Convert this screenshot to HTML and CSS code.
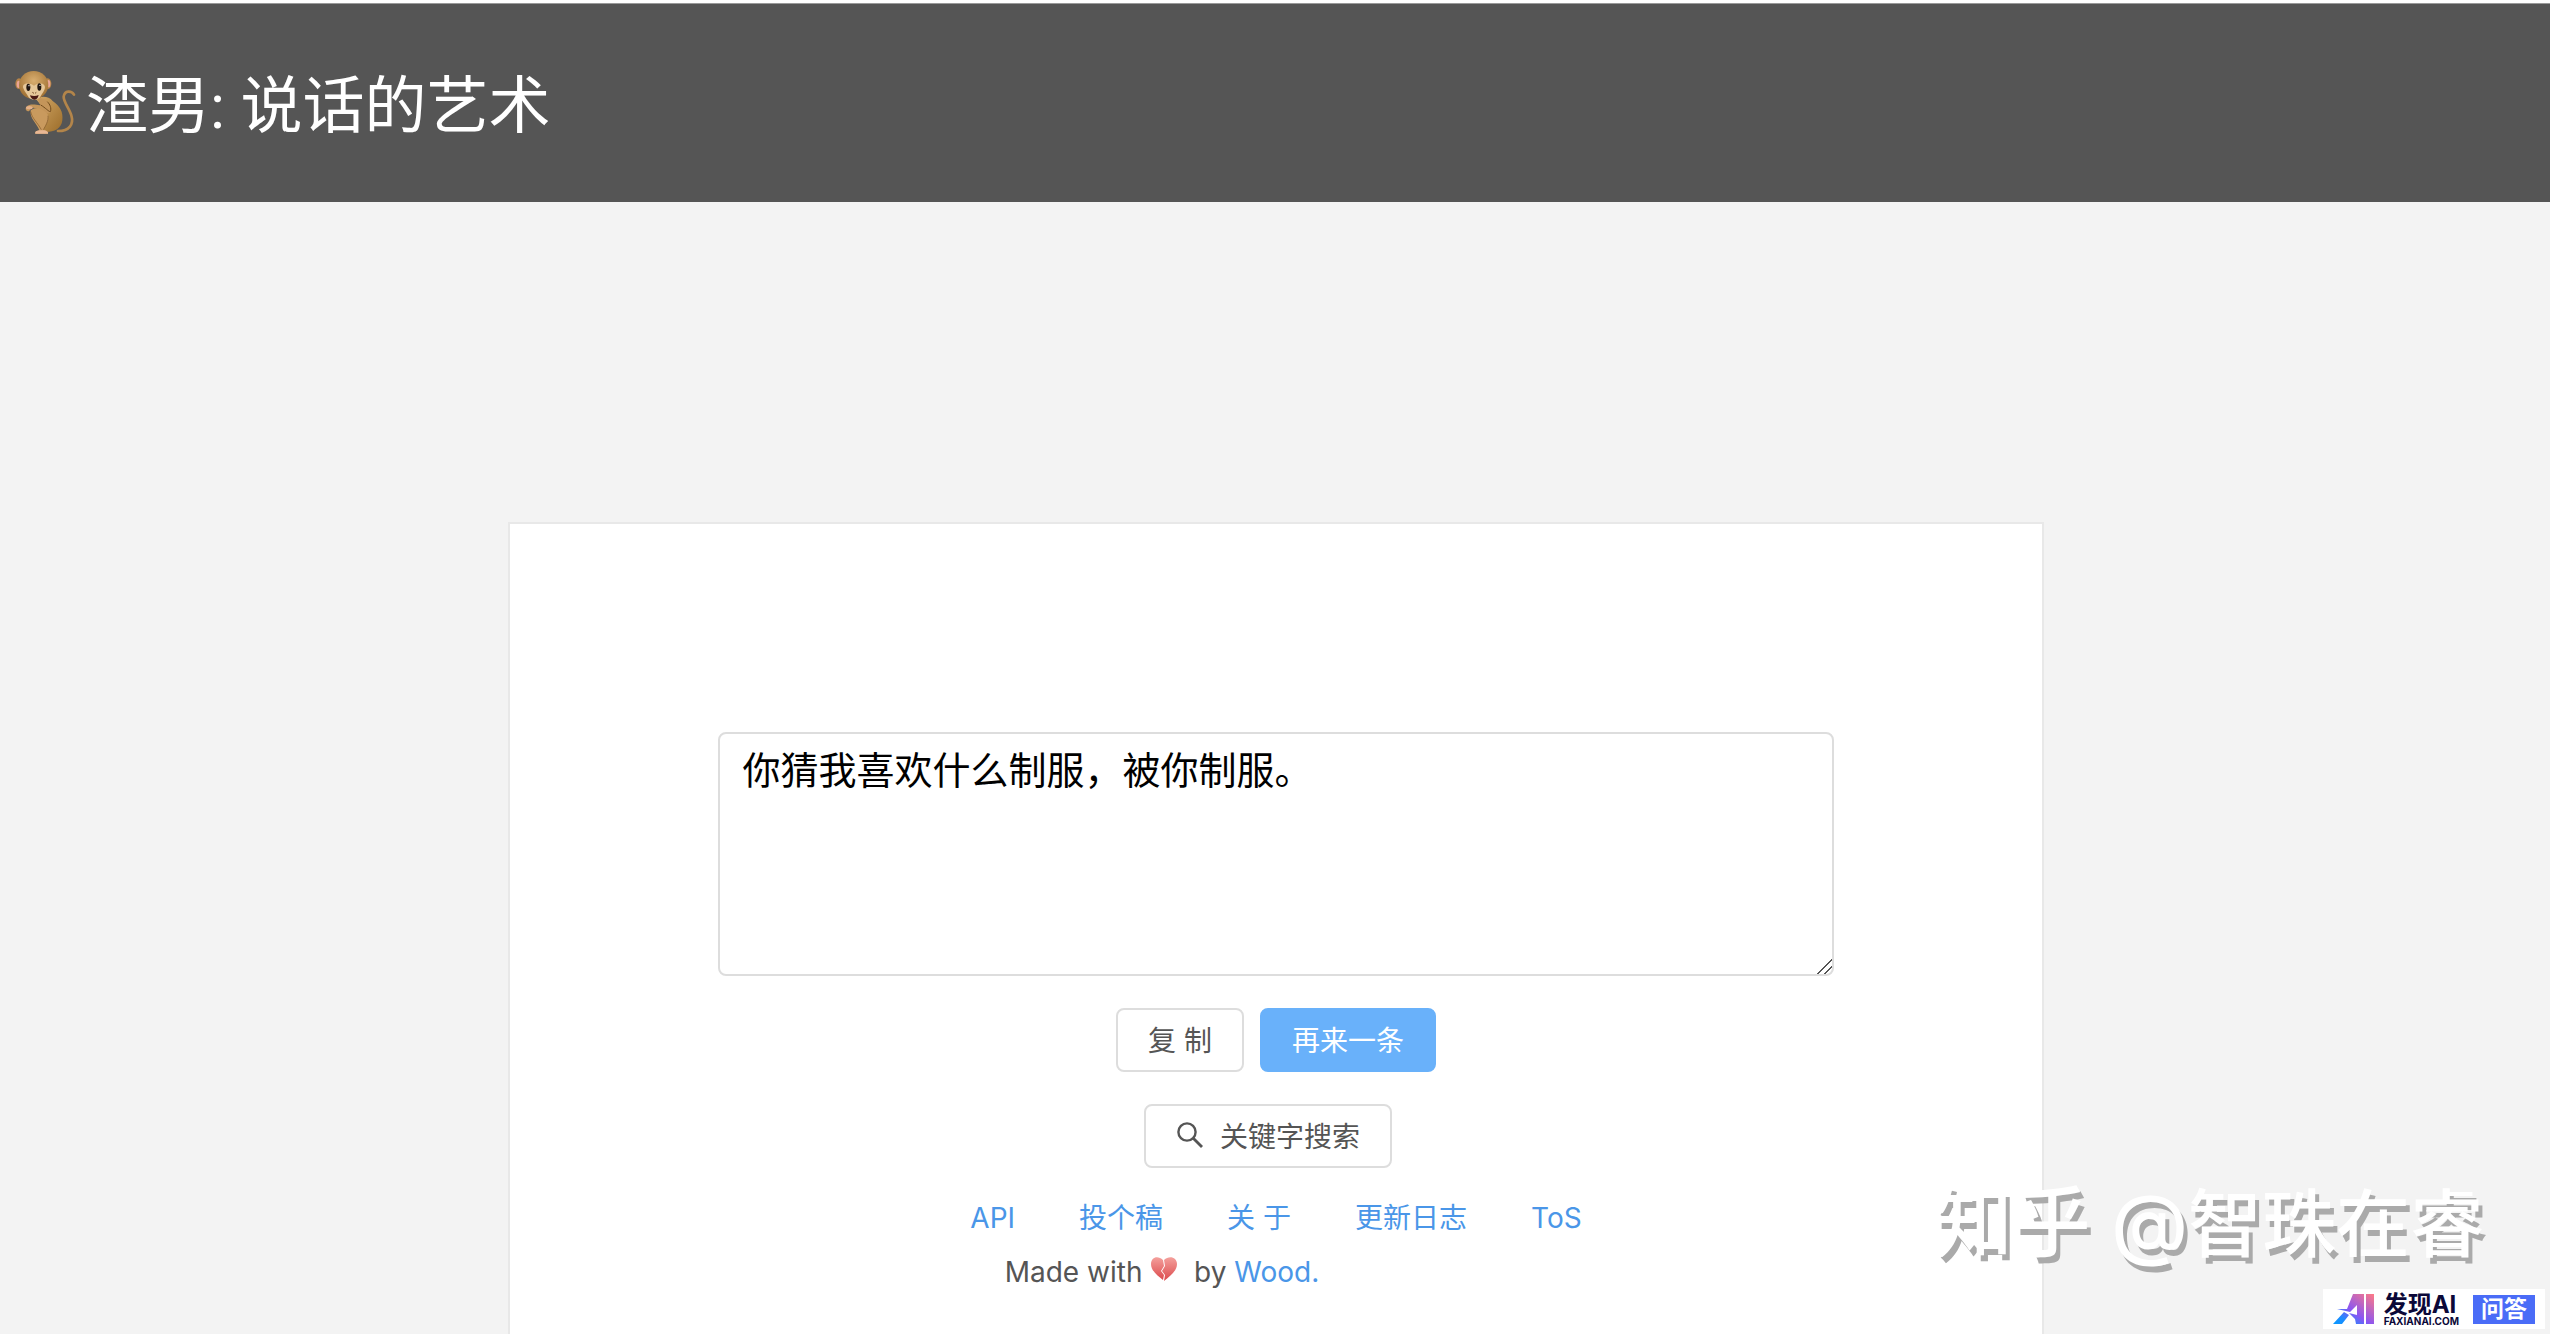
FILE: index.html
```
<!DOCTYPE html>
<html lang="zh-CN">
<head>
    <meta charset="UTF-8">
    <meta name="viewport" content="width=device-width, initial-scale=1.0">
    <title>渣男: 说话的艺术</title>
    <link rel="stylesheet" href="styles.css">
</head>
<body>

<header class="header">
    <svg class="monkey" viewBox="0 0 228 276" aria-hidden="true">
        <defs>
            <linearGradient id="fur" x1="0" y1="0" x2="1" y2="1">
                <stop offset="0" stop-color="#d2a766"/>
                <stop offset="1" stop-color="#9c6d2a"/>
            </linearGradient>
            <radialGradient id="head" cx="0.5" cy="0.35" r="0.6">
                <stop offset="0" stop-color="#d9ae70"/>
                <stop offset="1" stop-color="#a37436"/>
            </radialGradient>
        </defs>
        <path d="M150 210C184 210 198 190 190 163C184 143 166 122 167 107C170 88 190 88 198 101" fill="none" stroke="#b3854a" stroke-width="8" stroke-linecap="round"/>
        <path d="M84 114C98 104 122 104 134 120C156 136 166 152 163 178C160 204 138 214 110 213L92 200L112 150Z" fill="url(#fur)"/>
        <path d="M100 112C124 116 136 146 126 156C112 162 96 142 76 140C66 140 66 154 58 150C50 146 52 136 64 132C76 128 92 134 98 132C92 126 90 118 90 112Z" fill="#c4955a"/>
        <path d="M68 148C84 134 108 146 118 158C128 172 112 192 106 206C116 208 122 214 120 218L82 218C80 212 86 209 94 208C86 186 64 172 68 148Z" fill="#c99a5e"/>
        <path d="M98 132C112 140 122 152 127 152C131 142 126 130 118 122" fill="none" stroke="#6f4a1c" stroke-width="3"/>
        <path d="M68 152C72 172 88 184 100 206M106 206C112 196 122 180 120 164" fill="none" stroke="#80582a" stroke-width="2"/>
        <path d="M82 218C80 212 86 209 94 208L108 208C118 210 122 214 120 218Z" fill="#e8b795"/>
        <ellipse cx="64" cy="140" rx="10" ry="5" fill="#e3b08a"/>
        <ellipse cx="33" cy="68" rx="11" ry="16" fill="#b78448"/>
        <ellipse cx="32" cy="70" rx="6" ry="11" fill="#eaa596"/>
        <ellipse cx="119" cy="68" rx="11" ry="16" fill="#b78448"/>
        <ellipse cx="121" cy="68" rx="6" ry="11" fill="#eaa596"/>
        <ellipse cx="77" cy="72" rx="44" ry="42" fill="url(#head)"/>
        <path d="M46 82C40 64 66 64 78 74C92 62 116 66 110 84C106 94 102 98 98 106C92 120 66 120 60 106C57 98 50 94 46 82Z" fill="#e6c799"/>
        <ellipse cx="61" cy="79" rx="6" ry="11" fill="#1f1510"/>
        <ellipse cx="94" cy="78" rx="6" ry="11" fill="#1f1510"/>
        <circle cx="63" cy="74" r="2" fill="#fff"/>
        <circle cx="96" cy="73" r="2" fill="#fff"/>
        <path d="M73 94L78 97M85 94L81 97" stroke="#7a5230" stroke-width="3"/>
        <path d="M66 103Q80 108 92 102Q89 116 79 116Q69 115 66 103Z" fill="#4a1814"/>
    </svg>
    <h1>渣男: 说话的艺术</h1>
</header>

<main class="card">
    <textarea class="words" aria-label="渣男语录">你猜我喜欢什么制服，被你制服。</textarea>
    <div class="row">
        <button type="button" class="btn">复 制</button>
        <button type="button" class="btn btn-primary">再来一条</button>
    </div>
    <div class="row row-search">
        <button type="button" class="btn btn-search">
            <svg class="search-icon" viewBox="0 0 28 28" aria-hidden="true">
                <circle cx="11" cy="11" r="8.6" fill="none" stroke="#555" stroke-width="2.4"/>
                <path d="M17 17L26 26" stroke="#555" stroke-width="2.8"/>
            </svg>
            关键字搜索
        </button>
    </div>
    <nav class="links">
        <a href="#">API</a>
        <a href="#">投个稿</a>
        <a href="#">关 于</a>
        <a href="#">更新日志</a>
        <a href="#">ToS</a>
    </nav>
    <p class="made">
        Made with
        <svg class="heart" viewBox="0 0 28 26" role="img" aria-label="broken heart">
            <defs>
                <linearGradient id="red" x1="0" y1="0" x2="0" y2="1">
                    <stop offset="0" stop-color="#f4a09c"/>
                    <stop offset="1" stop-color="#dc4a4c"/>
                </linearGradient>
            </defs>
            <path d="M13 4C8 -1 1 1 1 8C1 15 8 20 13 24L14 19L11 15L14 10Z" fill="url(#red)"/>
            <path d="M14 4C19 -1 27 1 27 8C27 15 20 20 14 25L15 19L12 15L15 10Z" fill="url(#red)"/>
        </svg>
        &nbsp;by <a href="#">Wood.</a>
    </p>
</main>

<div class="watermark"><span class="site">知乎 @</span>智珠在睿</div>

<div class="badge">
    <svg class="badge-logo" viewBox="0 0 41 30" aria-hidden="true">
        <defs>
            <linearGradient id="logo" x1="0" y1="1" x2="1" y2="0">
                <stop offset="0" stop-color="#0a9bff"/>
                <stop offset="0.2" stop-color="#1b8cff"/>
                <stop offset="0.45" stop-color="#8a55f2"/>
                <stop offset="1" stop-color="#ff7a85"/>
            </linearGradient>
        </defs>
        <path d="M20 0H31V30H23L22 25L16 19L24 21V11L17 18L4 15L14 15ZM33 0H41V30H33ZM0 30L11 18L16 21L9 30Z" fill="url(#logo)"/>
    </svg>
    <div class="badge-name">
        <strong>发现AI</strong>
        <small>FAXIANAI.COM</small>
    </div>
    <span class="badge-tag">问答</span>
</div>

</body>
</html>
```
FILE: styles.css
```
* {
    box-sizing: border-box;
}
body {
    margin: 0;
    height: 100vh;
    overflow: hidden;
    display: flex;
    flex-direction: column;
    align-items: center;
    background-color: #f3f3f3;
    border-top: 3px solid #fff;
    color: #555;
    font-family: Inter, "Noto Sans CJK SC", sans-serif;
    font-size: 28px;
}
.header {
    width: 100%;
    height: 199px;
    flex-shrink: 0;
    display: flex;
    align-items: center;
    gap: 2px;
    padding: 8px 8px 0;
    background-color: #555;
    border-top: 1px solid #999;
    color: #fff;
}
.header h1 {
    margin: 0;
    font-family: Roboto, "Noto Sans CJK SC", sans-serif;
    font-size: 62px;
    font-weight: 400;
    line-height: 80px;
}
.monkey {
    width: 76px;
    height: 92px;
}
.card {
    width: 60.2%;
    flex: 1 0 auto;
    margin-top: 320px;
    margin-left: 2px;
    padding: 208px 208px 0;
    background: #fff;
    border: 2px solid #e8e8e8;
    border-bottom: 0;
    display: flex;
    flex-direction: column;
    align-items: center;
}
.words {
    display: block;
    width: 100%;
    height: 244px;
    padding: 8px 22px;
    margin-bottom: 32px;
    border: 2px solid #ddd;
    border-radius: 8px;
    color: #000;
    font-family: inherit;
    font-size: 38px;
    line-height: 56px;
    resize: vertical;
}
.words::-webkit-resizer {
    background: linear-gradient(135deg, transparent 47%, #555 47%, #555 54%, transparent 54%, transparent 72%, #555 72%, #555 79%, transparent 79%);
}
.row {
    display: flex;
    gap: 16px;
    margin-bottom: 32px;
}
.row-search {
    margin-right: 16px;
    margin-bottom: 30px;
}
.btn {
    height: 64px;
    padding: 0 30px 2px;
    display: flex;
    align-items: center;
    background: #fff;
    border: 2px solid #ddd;
    border-radius: 8px;
    color: #555;
    font-family: inherit;
    font-size: 28px;
}
.btn-primary {
    background: #69b1fa;
    border-color: #69b1fa;
    color: #fff;
}
.btn-search {
    gap: 16px;
}
.search-icon {
    width: 28px;
    height: 28px;
}
a {
    color: #4a96e8;
    text-decoration: none;
}
.links {
    display: flex;
    gap: 64px;
    line-height: 40px;
}
.made {
    margin: 14px 0 0;
    padding-right: 228px;
    line-height: 40px;
}
.heart {
    width: 28px;
    height: 26px;
}
.watermark {
    position: absolute;
    right: 66px;
    bottom: 60px;
    color: #fff;
    font-size: 74px;
    font-weight: 500;
    line-height: 100px;
    text-shadow: 4px 6px 0 #aaa;
}
.watermark .site {
    font-size: 78px;
}
.badge {
    position: absolute;
    right: 5px;
    bottom: 5px;
    height: 40px;
    padding: 0 10px;
    display: flex;
    align-items: center;
    background: #fff;
}
.badge-logo {
    width: 41px;
    height: 30px;
    margin-right: 10px;
}
.badge-name {
    display: flex;
    flex-direction: column;
    margin-right: 14px;
    color: #0b0838;
}
.badge-name strong {
    font-size: 24px;
    line-height: 24px;
}
.badge-name small {
    font-size: 10px;
    font-weight: 700;
    line-height: 8px;
}
.badge-tag {
    padding: 0 8px;
    background: #4a6cf7;
    color: #fff;
    font-size: 23px;
    font-weight: 700;
    line-height: 29px;
}
```
